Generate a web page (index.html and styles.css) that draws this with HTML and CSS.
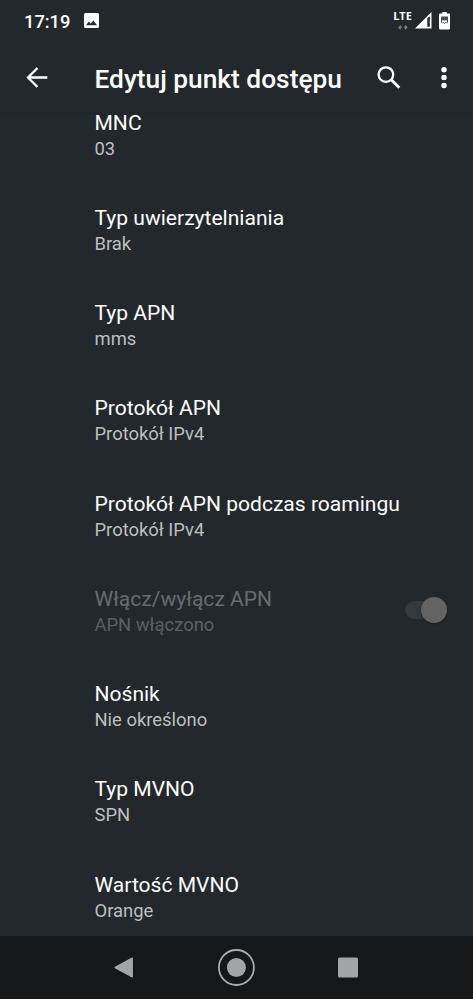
FILE: index.html
```html
<!DOCTYPE html>
<html lang="pl">
<head>
<meta charset="utf-8">
<title>Edytuj punkt dostępu</title>
<link rel="stylesheet" href="styles.css">
</head>
<body>
<div class="screen">
  <div class="status">
    <span class="clock">17:19</span>
    <svg class="picture" width="15" height="15" viewBox="0 0 15 15"><path fill="#fff" fill-rule="evenodd" d="M1.500 0h12A1.500 1.500 0 0 1 15 1.500v12a1.500 1.500 0 0 1-1.500 1.500h-12A1.500 1.500 0 0 1 0 13.500v-12A1.500 1.500 0 0 1 1.500 0zM2 12.300h11L9.400 7.500l-2.800 3.300L4.800 8.600z"/></svg>
    <div class="network">
      <span class="lte">LTE</span>
      <svg width="10" height="5" viewBox="0 0 10 5" fill="#777a7c"><path d="M2.200 0l1 1.500h1L2.200 5 .2 2.500l1-1zM7.700 0l2 2.500-1 1L7.700 5l-1-1.500-1-1z"/></svg>
    </div>
    <svg class="signal" width="17" height="17" viewBox="0 0 17 17"><path fill="#fff" fill-rule="evenodd" d="M16.500 0v16.500H0zM12.300 6v8.700h2.500V4.300z"/></svg>
    <svg class="battery" width="11" height="18" viewBox="0 0 11 18"><path fill="#fff" d="M3.300 0h4.400v1.500h2.100q1.200 0 1.200 1.200v13.600q0 1.200-1.200 1.200H1.200Q0 17.500 0 16.300V2.700q0-1.200 1.200-1.200h2.100z"/><path fill="#4b5053" d="M2 4.500h7v4H2z"/><path fill="none" stroke="#4b5053" d="M2.500 8v2.200l1 1 1-1 1 1.300 1-1.300 1 1 1-1V8"/><path stroke="#b8babb" d="M3 8.500h1.500M6.300 8.500h1.500"/></svg>
  </div>
  <header class="toolbar">
    <svg class="back" width="22" height="22" viewBox="0 0 22 22"><path fill="none" stroke="#fff" stroke-width="2.300" d="M21.300 10.500H2.500M11.500 1L2 10.500l9.500 9.500"/></svg>
    <h1>Edytuj punkt dostępu</h1>
    <svg class="search" width="24" height="24" viewBox="0 0 24 24" fill="none" stroke="#fff"><circle cx="8.900" cy="8.600" r="7.300" stroke-width="2.300"/><path stroke-width="2.800" d="M14 13.500l8.300 8.300"/></svg>
    <svg class="more" width="6" height="22" viewBox="0 0 6 22" fill="#fff"><circle cx="3" cy="2.800" r="2.750"/><circle cx="3" cy="10.600" r="2.750"/><circle cx="3" cy="18.400" r="2.750"/></svg>
  </header>
  <main class="list">
    <div class="row"><div><h2>MNC</h2><p>03</p></div></div>
    <div class="row"><div><h2>Typ uwierzytelniania</h2><p>Brak</p></div></div>
    <div class="row"><div><h2>Typ APN</h2><p>mms</p></div></div>
    <div class="row"><div><h2>Protokół APN</h2><p>Protokół IPv4</p></div></div>
    <div class="row"><div><h2>Protokół APN podczas roamingu</h2><p>Protokół IPv4</p></div></div>
    <div class="row disabled"><div><h2>Włącz/wyłącz APN</h2><p>APN włączono</p></div><span class="switch"><span class="thumb"></span></span></div>
    <div class="row"><div><h2>Nośnik</h2><p>Nie określono</p></div></div>
    <div class="row"><div><h2>Typ MVNO</h2><p>SPN</p></div></div>
    <div class="row"><div><h2>Wartość MVNO</h2><p>Orange</p></div></div>
  </main>
  <nav class="navbar">
    <svg width="38" height="38" viewBox="0 0 38 38"><path fill="#a3a4a5" stroke="#a3a4a5" stroke-width="1.500" stroke-linejoin="round" d="M10.200 18.500L27.200 9.200v18.600z"/></svg>
    <svg width="38" height="38" viewBox="0 0 38 38"><circle cx="19.400" cy="18.500" r="17.500" fill="none" stroke="#a9aaab" stroke-width="1.800"/><circle cx="19.400" cy="18.500" r="9.500" fill="#a3a4a5"/></svg>
    <svg width="38" height="38" viewBox="0 0 38 38"><rect x="10" y="8.500" width="20" height="20" rx="1.500" fill="#a3a4a5"/></svg>
  </nav>
</div>
</body>
</html>
```
FILE: styles.css
```css
* { box-sizing: border-box; }
body { margin: 0; background: #23282c; font-family: Roboto, sans-serif; color: #fff; }
h1, h2, p { margin: 0; font-weight: 400; white-space: nowrap; }
svg { display: block; flex: none; }
.screen { display: flex; flex-direction: column; width: 473px; height: 999px; overflow: hidden; }
.status { display: flex; align-items: flex-start; height: 42px; flex: none; padding: 0 23px 0 24px; }
.clock { width: 60px; padding-top: 10px; font-size: 18.300px; line-height: 24px; font-weight: 500; }
.picture { margin-top: 13px; }
.network { display: flex; flex-direction: column; align-items: center; width: 19px; margin: 10px 3px 0 auto; gap: 3px; }
.lte { font: 700 11px/12px "Open Sans", sans-serif; }
.signal { margin-top: 12px; }
.battery { margin: 12px 0 0 7px; }
.toolbar { display: flex; align-items: center; height: 72px; flex: none; padding: 0 26px; border-bottom: 1px solid #202529; }
.back { margin-right: 46.500px; }
h1 { flex: 1; font-size: 26.300px; line-height: 32px; font-weight: 500; padding-top: 2px; }
.search { margin-right: 40px; }
.list { flex: 1; min-height: 0; }
.row { display: flex; justify-content: space-between; height: 95.250px; padding: 0 26px 0 94.500px; }
.row:first-child { margin-top: -5.400px; }
h2 { font-size: 21.050px; line-height: 28px; }
p { font-size: 18.400px; line-height: 24px; color: #bdbfc0; }
.disabled h2 { color: #686c6e; }
.disabled p { color: #5c6062; }
.switch { display: flex; align-items: center; justify-content: flex-end; width: 42px; height: 18px; margin-top: 16px; border-radius: 9px; background: #34393d; }
.thumb { width: 26px; height: 26px; flex: none; border-radius: 50%; background: #636363; box-shadow: 0 1px 2px #181c1f; }
.navbar { display: flex; align-items: center; justify-content: space-between; height: 63px; flex: none; padding: 0 107px 0 105px; background: #14181b; }
```
